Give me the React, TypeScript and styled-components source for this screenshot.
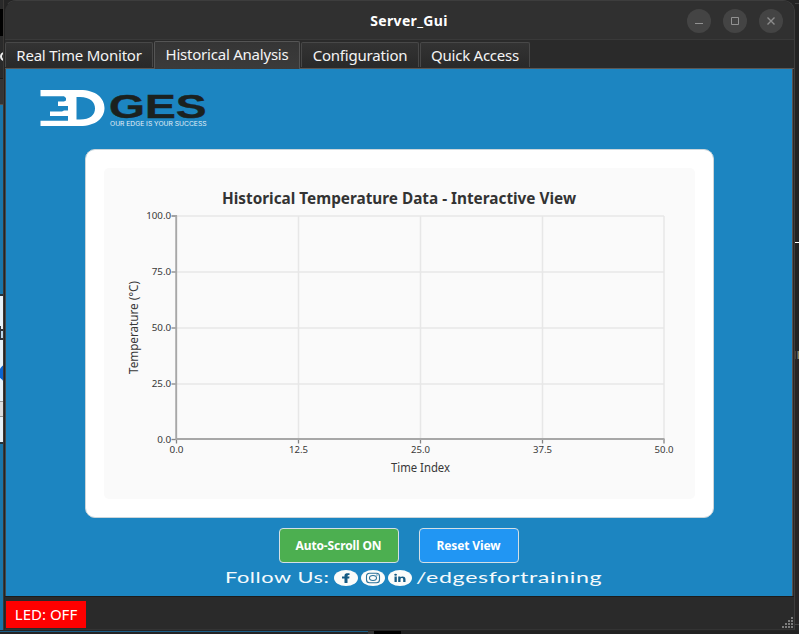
import React from "react";
import styled, { createGlobalStyle } from "styled-components";

const GlobalStyle = createGlobalStyle`
  html, body { margin: 0; padding: 0; overflow: hidden; background: #232323; }
  * { box-sizing: border-box; }
  body { font-family: "Noto Sans", "Open Sans", sans-serif; }
`;

const Desktop = styled.div`
  width: 799px;
  height: 634px;
  display: flex;
  flex-direction: column;
  background: #242424;
  overflow: hidden;
`;
const Middle = styled.div`
  display: flex;
  height: 630px;
`;
const EdgeStrip = styled.div<{ $w: number; $edge?: string }>`
  width: ${(p) => p.$w}px;
  height: 630px;
  flex: none;
  display: flex;
  flex-direction: column;
  overflow: hidden;
  border-right: ${(p) => (p.$edge ? `1px solid ${p.$edge}` : "0")};
`;
const Slice = styled.div<{ $h: number; $c: string }>`
  height: ${(p) => p.$h}px;
  background: ${(p) => p.$c};
  flex: none;
  overflow: hidden;
  display: flex;
  align-items: center;
`;
const BlueDot = styled.div`
  width: 18px;
  height: 18px;
  margin-left: -1px;
  flex: none;
  border-radius: 50%;
  background: #0b63cf;
`;
const LetterEdge = styled.div`
  width: 9px;
  height: 9px;
  flex: none;
  border-radius: 50%;
  border: 2px solid #eee;
`;
const BottomStrip = styled.div`
  display: flex;
  height: 4px;
  padding-top: 1px;
`;
const BottomPiece = styled.div<{ $w: number; $c: string; $h?: number }>`
  width: ${(p) => p.$w}px;
  height: ${(p) => p.$h ?? 3}px;
  background: ${(p) => p.$c};
`;

const Window = styled.div`
  width: 791px;
  height: 630px;
  flex: none;
  display: flex;
  flex-direction: column;
  background: #2a2a2a;
  border: 1px solid #3d3d3d;
  border-left-color: #242424;
  border-bottom-color: #333;
  border-radius: 12px 12px 0 0;
  overflow: hidden;
`;
const TitleBar = styled.header`
  height: 39px;
  flex: none;
  display: grid;
  grid-template-columns: 1fr auto 1fr;
  align-items: center;
  background: #303030;
  border-bottom: 1px solid #393939;
`;
const Title = styled.h1`
  grid-column: 2;
  margin: 2px 0 0 19px;
  font-size: 14px;
  line-height: 20px;
  font-weight: 700;
  color: #fff;
  letter-spacing: 0.35px;
`;
const Controls = styled.div`
  justify-self: end;
  display: flex;
  gap: 12px;
  padding-right: 11px;
  margin-top: 2px;
`;
const Control = styled.button`
  width: 24px;
  height: 24px;
  padding: 0;
  border: 0;
  border-radius: 50%;
  background: #444;
  display: grid;
  place-items: center;
`;
const Tabs = styled.nav`
  height: 29px;
  flex: none;
  display: flex;
  align-items: flex-end;
  gap: 1px;
  border-bottom: 1px solid #5b5856;
`;
const Tab = styled.button<{ $w: number; $active?: boolean; $ls?: number }>`
  width: ${(p) => p.$w}px;
  height: ${(p) => (p.$active ? 28 : 25)}px;
  margin-bottom: ${(p) => (p.$active ? -1 : 1)}px;
  padding: ${(p) => (p.$active ? "0 0 3px" : "0")};
  flex: none;
  font: 400 15px/22px "Noto Sans", sans-serif;
  letter-spacing: ${(p) => p.$ls ?? 0}px;
  white-space: nowrap;
  color: #f4f4f4;
  text-align: center;
  background: ${(p) => (p.$active ? "linear-gradient(#353535, #3b3b3b)" : "linear-gradient(#333, #292929)")};
  border: 1px solid ${(p) => (p.$active ? "#555" : "#484848")};
  border-bottom: 0;
  border-radius: 2px 2px 0 0;
`;
const Page = styled.main`
  height: 527px;
  flex: none;
  margin-right: 1px;
  display: flex;
  flex-direction: column;
  align-items: center;
  background: #1c85c1;
  border-left: 1px solid #45484a;
  border-right: 1px solid #55504e;
`;
const LogoRow = styled.div`
  align-self: stretch;
  height: 80px;
  flex: none;
  padding: 17px 0 0 32px;
`;
const Card = styled.section`
  width: 629px;
  height: 369px;
  flex: none;
  display: grid;
  place-items: center;
  background: #fff;
  border: 1px solid #cbd5da;
  border-radius: 10px;
`;
const ChartPanel = styled.div`
  width: 591px;
  height: 331px;
  background: #fafafa;
  border-radius: 5px;
  svg { display: block; }
`;
const Actions = styled.div`
  display: flex;
  gap: 20px;
  margin-top: 10px;
`;
const Action = styled.button<{ $w: number; $c: string }>`
  width: ${(p) => p.$w}px;
  height: 35px;
  padding: 1px 1px 0 0;
  font: 700 12px/18px "Noto Sans", sans-serif;
  letter-spacing: -0.12px;
  color: #fff;
  background: ${(p) => p.$c};
  border: 1px solid #d3dfe5;
  border-radius: 4px;
`;
const Follow = styled.footer`
  display: flex;
  align-items: center;
  align-self: flex-start;
  height: 18px;
  margin-top: 6px;
  margin-left: 219px;
`;
const Wide = styled.span<{ $w: number; $s: number }>`
  width: ${(p) => p.$w}px;
  flex: none;
  font: 400 15px/16px Lato, sans-serif;
  padding-bottom: 2px;
  letter-spacing: 0.4px;
  color: #f5fafc;
  white-space: nowrap;
  transform: scaleX(${(p) => p.$s});
  transform-origin: 0 50%;
`;
const Socials = styled.div`
  display: flex;
  gap: 3px;
  margin-right: 4px;
`;
const StatusBar = styled.div`
  flex: 1;
  display: flex;
  justify-content: space-between;
  border-top: 1px solid #1b1b1b;
  padding: 4px 1px 1px 1px;
`;
const Led = styled.div`
  width: 80px;
  height: 27px;
  background: #f00;
  color: #fff;
  font: 400 15px/27px "Noto Sans", sans-serif;
  text-align: center;
`;
const Grip = styled.svg`
  align-self: flex-end;
`;

function Logo() {
  return (
    <svg width="170" height="40" viewBox="38 86 170 40" overflow="visible">
      <path
        fill="#fff"
        fillRule="evenodd"
        d="M40.500 90H80C96 90 104.500 98 104.500 108S96 126 80 126H40.500V120.800H68V116H50V111.500H62L64 110.500H68V106H58V101.500H64L66 100.500V98L64 96.300H40.500ZM76.500 97V119.500H80C90 119.500 95 115 95 108.500S90 97 80 97Z"
      />
      <text x="109" y="118" fontSize="32.500" fontWeight="700" fontFamily="Liberation Sans, sans-serif" fill="#1b211f" stroke="#1b211f" strokeWidth=".4" textLength="97.500" lengthAdjust="spacingAndGlyphs">GES</text>
      <text x="110" y="126" fontSize="5.600" fontFamily="Inter, sans-serif" fill="#e5f1f8" textLength="96.500" lengthAdjust="spacingAndGlyphs">OUR EDGE IS YOUR SUCCESS</text>
    </svg>
  );
}

const xTicks = [
  { x: 176.5, label: "0.0", w: 14 },
  { x: 298.5, label: "12.5", w: 19 },
  { x: 420.5, label: "25.0", w: 19 },
  { x: 542.5, label: "37.5", w: 19 },
  { x: 664, label: "50.0", w: 19 },
];
const yTicks = [
  { y: 216, label: "100.0", w: 25 },
  { y: 272, label: "75.0", w: 19.5 },
  { y: 328, label: "50.0", w: 19.5 },
  { y: 384, label: "25.0", w: 19.5 },
  { y: 439.5, label: "0.0", w: 14 },
];

function Chart() {
  return (
    <svg width="591" height="331" viewBox="104 168 591 331" fontFamily="Noto Sans, sans-serif" fill="#383838">
      <text x="222" y="204" fontSize="16" fontWeight="700" fill="#333" textLength="354" lengthAdjust="spacingAndGlyphs">Historical Temperature Data - Interactive View</text>
      <g stroke="#e7e7e7" strokeWidth="1.500">
        {yTicks.slice(0, 4).map((t) => <path key={t.y} d={`M177 ${t.y}H664`} />)}
        {xTicks.slice(1).map((t) => <path key={t.x} d={`M${t.x} 216V439`} />)}
      </g>
      <g stroke="#858585" strokeWidth="1.300">
        {yTicks.map((t) => <path key={t.y} d={`M171.500 ${t.y}H177`} />)}
        {xTicks.map((t) => <path key={t.x} d={`M${t.x} 439V443.500`} />)}
      </g>
      <path d="M176.200 215.500V439H664.500" fill="none" stroke="#a7a7a7" strokeWidth="1.900" />
      <g fontSize="9.300">
        {yTicks.map((t) => <text key={t.y} x={171.2 - t.w} y={t.y + 3.3} textLength={t.w} lengthAdjust="spacingAndGlyphs">{t.label}</text>)}
        {xTicks.map((t) => <text key={t.x} x={t.x - t.w / 2} y="453" textLength={t.w} lengthAdjust="spacingAndGlyphs">{t.label}</text>)}
      </g>
      <text x="391" y="472" fontSize="12" textLength="59" lengthAdjust="spacingAndGlyphs">Time Index</text>
      <text transform="translate(138 374) rotate(-90)" fontSize="12" textLength="93" lengthAdjust="spacingAndGlyphs">Temperature (°C)</text>
    </svg>
  );
}

function SocialIcons() {
  return (
    <Socials>
      <svg width="24" height="16" viewBox="0 0 24 16">
        <ellipse cx="12" cy="8" rx="12" ry="8" fill="#fbfcfa" />
        <path d="M10.500 13V8.500H8V6.500H10.500V5.500C10.500 3.500 12 3 15.500 3.200V5C14 5 13.500 5.100 13.500 6.500H15.500L15.200 8.500H13.500V13Z" fill="#155b84" />
      </svg>
      <svg width="24" height="16" viewBox="0 0 24 16">
        <ellipse cx="12" cy="8" rx="12" ry="8" fill="#fbfcfa" />
        <g fill="none" stroke="#2b729a" strokeWidth="1.100">
          <rect x="5.500" y="3.200" width="13" height="9.600" rx="3" />
          <ellipse cx="12" cy="8" rx="3.500" ry="2.500" />
        </g>
        <circle cx="16" cy="5" r=".7" fill="#2b729a" />
      </svg>
      <svg width="24" height="16" viewBox="0 0 24 16">
        <ellipse cx="12" cy="8" rx="12" ry="8" fill="#fbfcfa" />
        <path d="M6.500 6.500H8.800V12H6.500ZM10.200 6.500H12.400V7.200C13.500 5.900 17.500 5.900 17.500 9V12H15.200V9.300C15.200 7.500 12.500 7.600 12.500 9.300V12H10.200Z" fill="#155b84" />
        <ellipse cx="7.600" cy="4.700" rx="1.400" ry="1" fill="#155b84" />
      </svg>
    </Socials>
  );
}

const gripDots = [0, 1, 2, 3].flatMap((r) => Array.from({ length: r + 1 }, (_, i) => [9 - i * 3, r * 3]));

export default function App() {
  return (
    <>
      <GlobalStyle />
      <Desktop>
        <Middle>
          <EdgeStrip $w={4} $edge="#3a3836">
            <Slice $h={9} $c="#292929" />
            <Slice $h={27} $c="#000" />
            <Slice $h={16} $c="#2a2a2a" />
            <Slice $h={9} $c="#2a2a2a"><LetterEdge /></Slice>
            <Slice $h={17} $c="#2a2a2a" />
            <Slice $h={1} $c="#1a1a1a" />
            <Slice $h={25} $c="#353535" />
            <Slice $h={1} $c="#55504e" />
            <Slice $h={189} $c="#1b75a8" />
            <Slice $h={2} $c="#26323a" />
            <Slice $h={30} $c="#e8f2f8" />
            <Slice $h={3} $c="linear-gradient(90deg, #30343a 50%, #e8f2f8 50%)" />
            <Slice $h={2} $c="#30343a" />
            <Slice $h={7} $c="linear-gradient(90deg, #30343a 35%, #b9d4e8 35%)" />
            <Slice $h={2} $c="#30343a" />
            <Slice $h={24} $c="#e8f2f8" />
            <Slice $h={18} $c="#e8f2f8"><BlueDot /></Slice>
            <Slice $h={19} $c="#e8f2f8" />
            <Slice $h={1} $c="#999" />
            <Slice $h={14} $c="#ddd" />
            <Slice $h={1} $c="#999" />
            <Slice $h={25} $c="#e8f2f8" />
            <Slice $h={2} $c="#26323a" />
            <Slice $h={186} $c="#1b75a8" />
          </EdgeStrip>
          <Window>
            <TitleBar>
              <Title>Server_Gui</Title>
              <Controls>
                <Control aria-label="Minimize">
                  <svg width="10" height="10" viewBox="0 0 10 10"><path d="M1 7.500H9" stroke="#929292" /></svg>
                </Control>
                <Control aria-label="Maximize">
                  <svg width="10" height="10" viewBox="0 0 10 10"><path d="M1.500 1.500H8.500V8.500H1.500Z" fill="none" stroke="#929292" /></svg>
                </Control>
                <Control aria-label="Close">
                  <svg width="10" height="10" viewBox="0 0 10 10"><path d="M1.500 1.500L8.500 8.500M8.500 1.500L1.500 8.500" stroke="#8c8c8c" strokeWidth="1.400" /></svg>
                </Control>
              </Controls>
            </TitleBar>
            <Tabs>
              <Tab $w={148} $ls={-0.22}>Real Time Monitor</Tab>
              <Tab $w={146} $ls={-0.22} $active>Historical Analysis</Tab>
              <Tab $w={118} $ls={-0.2}>Configuration</Tab>
              <Tab $w={110} $ls={-0.25}>Quick Access</Tab>
            </Tabs>
            <Page>
              <LogoRow><Logo /></LogoRow>
              <Card>
                <ChartPanel><Chart /></ChartPanel>
              </Card>
              <Actions>
                <Action $w={120} $c="#4caf50">Auto-Scroll ON</Action>
                <Action $w={100} $c="#2196f3">Reset View</Action>
              </Actions>
              <Follow>
                <Wide $w={109} $s={1.45}>Follow Us:</Wide>
                <SocialIcons />
                <Wide $w={186} $s={1.55}>/edgesfortraining</Wide>
              </Follow>
            </Page>
            <StatusBar>
              <Led>LED: OFF</Led>
              <Grip width="11" height="11" viewBox="0 0 11 11">
                {gripDots.map(([x, y]) => <rect key={`${x}-${y}`} x={x} y={y} width="2" height="2" fill="#7c7c7c" />)}
              </Grip>
            </StatusBar>
          </Window>
          <EdgeStrip $w={4}>
            <Slice $h={3} $c="#242424" />
            <Slice $h={1} $c="#444" />
            <Slice $h={238} $c="#222" />
            <Slice $h={1} $c="#fff" />
            <Slice $h={108} $c="#222" />
            <Slice $h={8} $c="linear-gradient(90deg, #4c4033 25%, #222 25% 50%, #47586b 50% 75%, #8c8558 75%)" />
            <Slice $h={265} $c="#272525" />
            <Slice $h={1} $c="#444" />
          </EdgeStrip>
        </Middle>
        <BottomStrip>
          <BottomPiece $w={368} $c="#1b5f88" $h={1} />
          <BottomPiece $w={6} $c="#333" />
          <BottomPiece $w={27} $c="#000" />
          <BottomPiece $w={398} $c="#222" />
        </BottomStrip>
      </Desktop>
    </>
  );
}
